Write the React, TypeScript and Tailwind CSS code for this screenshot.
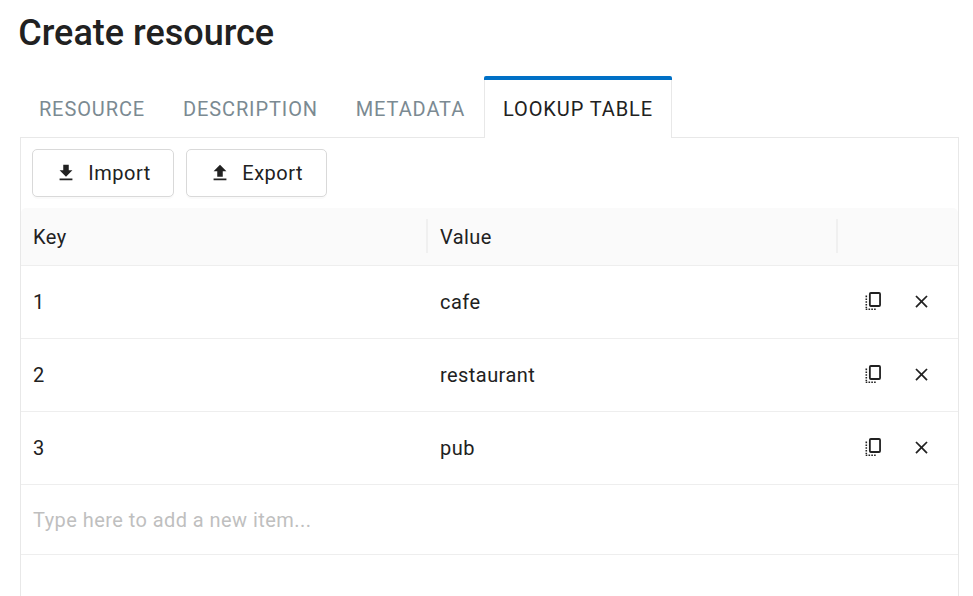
import React from "react";
import { MdClose } from "react-icons/md";

const tabs = ["RESOURCE", "DESCRIPTION", "METADATA"];
const rows = [
  { key: "1", value: "cafe" },
  { key: "2", value: "restaurant" },
  { key: "3", value: "pub" },
];

function CopyIcon() {
  return (
    <svg viewBox="0 0 20 20" className="h-5 w-5" fill="none" stroke="currentColor">
      <rect x="5.850" y="2" width="10.200" height="13" rx="1" strokeWidth="1.800" />
      <path d="M2.300 4.600v12.500" strokeWidth="1.600" strokeDasharray="1.600 1.200" />
      <path d="M1.700 18.200h10.800" strokeWidth="1.600" strokeDasharray="1.600 1.200" />
    </svg>
  );
}

function ToolButton({ label, up, width }: { label: string; up?: boolean; width: string }) {
  return (
    <button className={`flex h-12 items-center rounded-[5px] border border-[#d9d9d9] bg-white pl-[21.500px] shadow-[0_2px_0_rgba(0,0,0,0.02)] ${width}`}>
      <svg viewBox="0 0 24 24" className="h-[22px] w-[22px]" fill="currentColor">
        <path d={up ? "M5 10h4v6h6v-6h4l-7-7-7 7zM5 18v2h14v-2H5z" : "M19 9h-4V3H9v6H5l7 7 7-7zM5 18v2h14v-2H5z"} />
      </svg>
      <span className="ml-[11.800px] tracking-[0.500px]">{label}</span>
    </button>
  );
}

export default function App() {
  return (
    <main className="flex h-[596px] w-[973px] flex-col overflow-hidden bg-white pr-[14px] pl-5 font-[Roboto,sans-serif] text-[20px] leading-6 tracking-[0.440px] text-[#212121]">
      <h1 className="-ml-[1.800px] pt-3 text-[36px] leading-[42px] font-medium tracking-[0px]">Create resource</h1>
      <nav className="mt-[22px] flex h-[62px] shrink-0 text-[20px] tracking-[0.900px] text-[#7b8a92]">
        {tabs.map((tab) => (
          <div key={tab} className="flex items-center border-b border-[#e8e8e8] px-[18.900px] pt-[5px]">{tab}</div>
        ))}
        <div className="flex w-[188px] flex-col">
          <div className="h-1 rounded-t-[2px] bg-[#0070c6]" />
          <div className="flex flex-1 items-center justify-center border-x border-[#e8e8e8] pb-px text-[#212121]">LOOKUP TABLE</div>
        </div>
        <div className="flex-1 border-b border-[#e8e8e8]" />
      </nav>
      <section className="flex-1 border-x border-[#e8e8e8]">
        <div className="flex h-[70px] gap-3 px-[11px] pt-[11px]">
          <ToolButton label="Import" width="w-[142px]" />
          <ToolButton label="Export" up width="w-[141px]" />
        </div>
        <div className="grid h-[58px] grid-cols-[407px_410px_1fr] items-start rounded-t-[5px] border-b border-[#eeeeee] bg-[#fafafa] pt-[11px]">
          <div className="flex h-[34px] items-center border-r-2 border-[#f0f0f0] pt-px pl-3">Key</div>
          <div className="flex h-[34px] items-center border-r-2 border-[#f0f0f0] pt-px pl-3">Value</div>
        </div>
        {rows.map((row) => (
          <div key={row.key} className="grid h-[73px] grid-cols-[407px_410px_1fr] items-center border-b border-[#eeeeee]">
            <div className="pl-3">{row.key}</div>
            <div className="pl-3">{row.value}</div>
            <div className="flex items-start gap-[27px] pb-px pl-[26px]">
              <CopyIcon />
              <MdClose className="h-[21px] w-[21px] shrink-0" />
            </div>
          </div>
        ))}
        <div className="flex h-[70px] items-center border-b border-[#eeeeee] px-3 text-[#bfbfbf]">Type here to add a new item...</div>
      </section>
    </main>
  );
}
